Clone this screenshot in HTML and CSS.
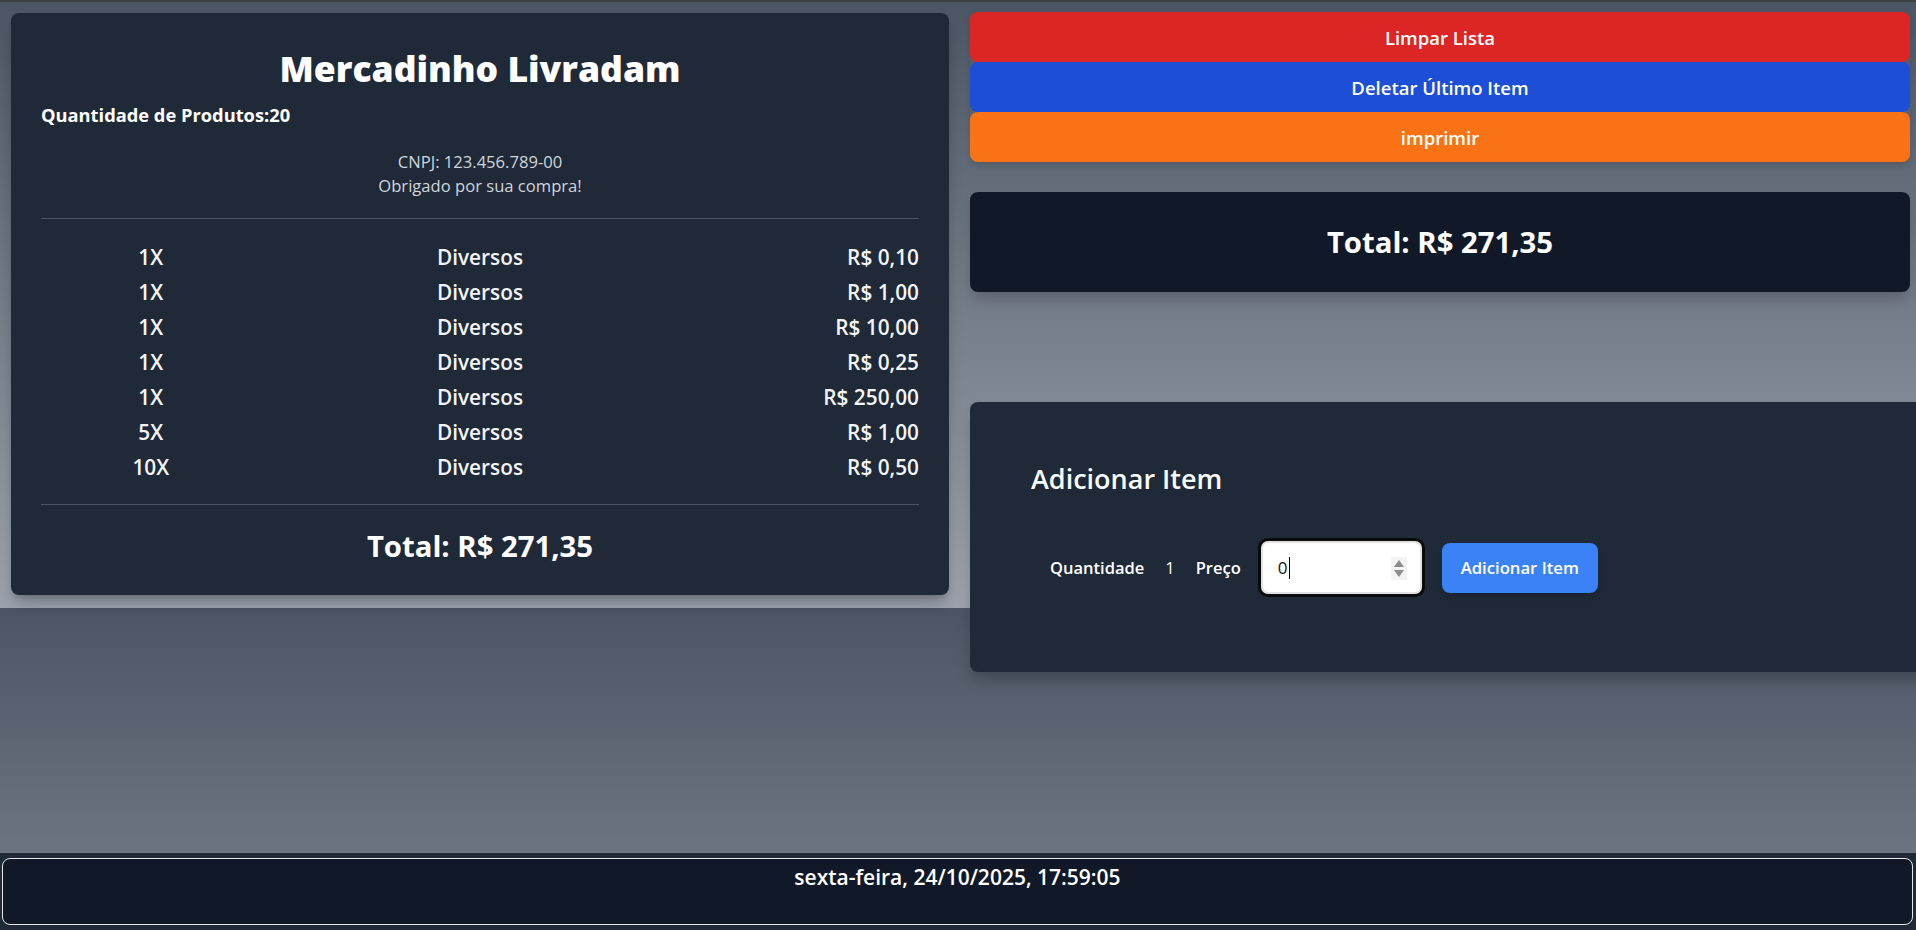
FILE: index.html
```html
<!DOCTYPE html>
<html lang="pt-BR">
<head>
<meta charset="utf-8">
<title>Mercadinho Livradam</title>
<link rel="stylesheet" href="styles.css">
</head>
<body>
<div class="page">
  <main class="layout">
    <section class="receipt">
      <h1 class="receipt-title">Mercadinho Livradam</h1>
      <p class="receipt-count">Quantidade de Produtos:20</p>
      <div class="receipt-info">
        <p>CNPJ: 123.456.789-00</p>
        <p>Obrigado por sua compra!</p>
      </div>
      <hr class="divider">
      <ul class="items">
        <li class="item"><span class="qty">1X</span><span class="name">Diversos</span><span class="price">R$ 0,10</span></li>
        <li class="item"><span class="qty">1X</span><span class="name">Diversos</span><span class="price">R$ 1,00</span></li>
        <li class="item"><span class="qty">1X</span><span class="name">Diversos</span><span class="price">R$ 10,00</span></li>
        <li class="item"><span class="qty">1X</span><span class="name">Diversos</span><span class="price">R$ 0,25</span></li>
        <li class="item"><span class="qty">1X</span><span class="name">Diversos</span><span class="price">R$ 250,00</span></li>
        <li class="item"><span class="qty">5X</span><span class="name">Diversos</span><span class="price">R$ 1,00</span></li>
        <li class="item"><span class="qty">10X</span><span class="name">Diversos</span><span class="price">R$ 0,50</span></li>
      </ul>
      <hr class="divider divider-bottom">
      <p class="receipt-total">Total: R$ 271,35</p>
    </section>

    <aside class="side">
      <div class="actions">
        <button class="btn btn-red">Limpar Lista</button>
        <button class="btn btn-blue">Deletar Último Item</button>
        <button class="btn btn-orange">imprimir</button>
      </div>

      <div class="total-card">
        <p class="total-text">Total: R$ 271,35</p>
      </div>

      <div class="add-card">
        <h2 class="add-title">Adicionar Item</h2>
        <div class="add-form">
          <span class="form-label">Quantidade</span>
          <span class="form-value">1</span>
          <span class="form-label">Preço</span>
          <div class="price-input">
            <span class="price-value">0</span><span class="caret"></span>
            <span class="spinner"><span class="tri-up"></span><span class="tri-down"></span></span>
          </div>
          <button class="btn-add">Adicionar Item</button>
        </div>
      </div>
    </aside>
  </main>
</div>
<footer class="footer">
  <div class="footer-box">sexta-feira, 24/10/2025, 17:59:05</div>
</footer>
</body>
</html>
```

FILE: styles.css
```css
* { box-sizing: border-box; }

html, body {
  margin: 0;
  padding: 0;
}

body {
  width: 1916px;
  height: 930px;
  overflow: hidden;
  font-family: "Open Sans", "Noto Sans", sans-serif;
  color: #f9fafb;
  background: #1f2937;
}

p, h1, h2, ul { margin: 0; padding: 0; }

.page {
  height: 853px;
  border-top: 2px solid #3c3f44;
  background-image: linear-gradient(to bottom, #4b5563, #9ca3af);
  background-size: 100% 606px;
  background-repeat: repeat-y;
  overflow: visible;
}

.layout {
  display: flex;
  align-items: flex-start;
  gap: 21px;
  padding: 10px 0 0 11px;
}

/* Receipt card */
.receipt {
  width: 938px;
  height: 582px;
  margin-top: 1px;
  background: #1f2937;
  border-radius: 8px;
  padding: 35px 30px 0 30px;
  box-shadow: 0 10px 15px -3px rgba(0,0,0,0.25), 0 4px 6px -4px rgba(0,0,0,0.2);
}

.receipt-title {
  text-align: center;
  font-size: 35.5px;
  line-height: 40px;
  font-weight: 800;
  color: #ffffff;
}

.receipt-count {
  margin-top: 13px;
  font-size: 18.3px;
  line-height: 28px;
  font-weight: 700;
  color: #ffffff;
}

.receipt-info {
  margin-top: 21px;
  text-align: center;
  font-size: 16.6px;
  line-height: 24px;
  color: #d1d5db;
}

.divider {
  margin: 20px 0 0 0;
  border: 0;
  border-top: 1px solid #4b5563;
  height: 0;
}

.items {
  list-style: none;
  margin-top: 20px;
}

.item {
  display: flex;
  height: 35px;
  align-items: center;
  font-size: 20.8px;
  font-weight: 600;
  color: #f3f4f6;
}

.qty { width: 25%; text-align: center; }
.name { width: 50%; text-align: center; }
.price { width: 25%; text-align: right; }

.divider-bottom { margin-top: 20px; }

.receipt-total {
  margin-top: 23px;
  text-align: center;
  font-size: 29.3px;
  line-height: 36px;
  font-weight: 700;
  color: #ffffff;
}

/* Side column */
.side {
  width: 940px;
  flex: none;
  display: flex;
  flex-direction: column;
}

.actions {
  display: flex;
  flex-direction: column;
  box-shadow: 0 4px 6px -1px rgba(0,0,0,0.15);
  border-radius: 8px;
}

.btn {
  height: 50px;
  border: 0;
  border-radius: 8px;
  font-family: inherit;
  font-size: 18.5px;
  font-weight: 600;
  color: #ffffff;
  cursor: pointer;
}

.btn-red { background: #dc2626; }
.btn-blue { background: #1d4ed8; }
.btn-orange { background: #f97316; }

.total-card {
  margin-top: 30px;
  height: 100px;
  background: #111827;
  border-radius: 8px;
  display: flex;
  align-items: center;
  justify-content: center;
  box-shadow: 0 10px 15px -3px rgba(0,0,0,0.2);
}

.total-text {
  font-size: 29.3px;
  line-height: 36px;
  font-weight: 700;
  color: #ffffff;
}

.add-card {
  margin-top: 110px;
  width: 980px;
  height: 270px;
  background: #1f2937;
  border-radius: 8px;
  padding: 59px 60px 0 61px;
  box-shadow: 0 10px 15px -3px rgba(0,0,0,0.25);
}

.add-title {
  font-size: 27px;
  line-height: 36px;
  font-weight: 600;
  color: #f9fafb;
}

.add-form {
  margin-top: 41px;
  display: flex;
  align-items: center;
  padding-left: 19px;
}

.form-label {
  font-size: 16.5px;
  font-weight: 600;
  color: #ffffff;
}

.form-value {
  margin: 0 21px;
  font-size: 16.5px;
  color: #ffffff;
}

.price-input {
  margin-left: 17px;
  width: 167px;
  height: 59px;
  border: 3px solid #0b0b0b;
  border-radius: 10px;
  background: #ffffff;
  box-shadow: inset 0 0 0 2px #e3e3e3;
  display: flex;
  align-items: center;
  padding-left: 17px;
  position: relative;
}

.price-value {
  font-size: 17px;
  color: #111111;
}

.caret {
  width: 1px;
  height: 22px;
  background: #000;
  margin-left: 1px;
}

.spinner {
  position: absolute;
  right: 15px;
  top: 16px;
  width: 16px;
  height: 23px;
  background: #f3f3f3;
  display: flex;
  flex-direction: column;
  align-items: center;
  justify-content: space-between;
  padding: 3px 0;
}

.tri-up {
  width: 0; height: 0;
  border-left: 5px solid transparent;
  border-right: 5px solid transparent;
  border-bottom: 7px solid #8c8c8c;
}

.tri-down {
  width: 0; height: 0;
  border-left: 5px solid transparent;
  border-right: 5px solid transparent;
  border-top: 7px solid #8c8c8c;
}

.btn-add {
  margin-left: 17px;
  width: 156px;
  height: 50px;
  border: 0;
  border-radius: 8px;
  background: #3b82f6;
  color: #ffffff;
  font-family: inherit;
  font-size: 16.7px;
  font-weight: 600;
  box-shadow: 0 4px 6px -1px rgba(0,0,0,0.2);
}

/* Footer */
.footer {
  height: 77px;
  background: #1f2937;
  padding: 5px 3px 5px 2px;
}

.footer-box {
  height: 67px;
  border: 1px solid #e5e7eb;
  border-radius: 8px;
  background: #111827;
  text-align: center;
  font-size: 21px;
  line-height: 28px;
  font-weight: 600;
  color: #ffffff;
  padding-top: 4px;
}
```
